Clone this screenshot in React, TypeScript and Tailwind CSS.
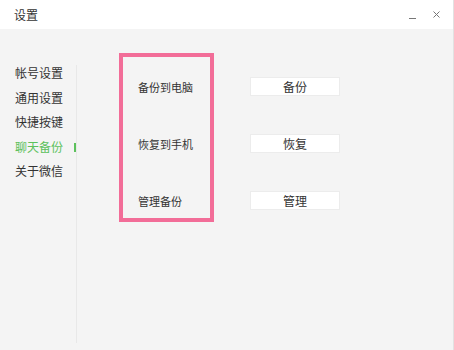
import React from 'react';

const menuItems = ['帐号设置', '通用设置', '快捷按键', '聊天备份', '关于微信'];
const activeItem = '聊天备份';

const rows = [
  { label: '备份到电脑', action: '备份' },
  { label: '恢复到手机', action: '恢复' },
  { label: '管理备份', action: '管理' },
];

const App: React.FC = () => {
  return (
    <div className="w-[454px] h-[350px] bg-[#f4f4f4] flex flex-col border-r border-[#e2e2e2] font-['Noto_Sans_CJK_SC',sans-serif] text-[#333]">
      {/* Title bar */}
      <div className="h-[29px] bg-white flex items-center justify-between pl-[14px] pr-[13px]">
        <span className="text-[12px]">设置</span>
        <div className="flex items-center gap-[17px] text-[#777]">
          <svg width="7" height="7" viewBox="0 0 7 7" className="mt-[4px]">
            <line x1="0" y1="5.5" x2="7" y2="5.5" stroke="currentColor" strokeWidth="1" />
          </svg>
          <svg width="7" height="7" viewBox="0 0 7 7">
            <path d="M0.5 0.5 L6.5 6.5 M6.5 0.5 L0.5 6.5" stroke="currentColor" strokeWidth="1" />
          </svg>
        </div>
      </div>

      {/* Body */}
      <div className="flex flex-1">
        {/* Sidebar */}
        <div className="w-[76px] pt-[32px] flex flex-col">
          {menuItems.map((item) => (
            <div key={item} className="h-[24.5px] pl-[15px] flex items-center justify-between text-[12px]">
              <span className={item === activeItem ? 'text-[#5cc15c]' : ''}>{item}</span>
              {item === activeItem && <div className="w-[2px] h-[9px] bg-[#5cc15c] mt-[2px]" />}
            </div>
          ))}
        </div>
        <div className="w-px bg-[#e8e8e8] mt-[36px] mb-[7px]" />

        {/* Content */}
        <div className="flex pl-[42px] pt-[24px]">
          <div className="w-[95px] h-[169px] border-4 border-[#f26d98] flex flex-col gap-[38px] pt-[21px] pl-[15px]">
            {rows.map((r) => (
              <div key={r.label} className="h-[19px] flex items-center text-[11px]">
                {r.label}
              </div>
            ))}
          </div>
          <div className="ml-[36px] pt-[24px] flex flex-col gap-[38px]">
            {rows.map((r) => (
              <button
                key={r.action}
                className="w-[90px] h-[19px] bg-white border border-[#ececec] flex items-center justify-center text-[12px] text-[#333]"
              >
                {r.action}
              </button>
            ))}
          </div>
        </div>
      </div>
    </div>
  );
};

export default App;
